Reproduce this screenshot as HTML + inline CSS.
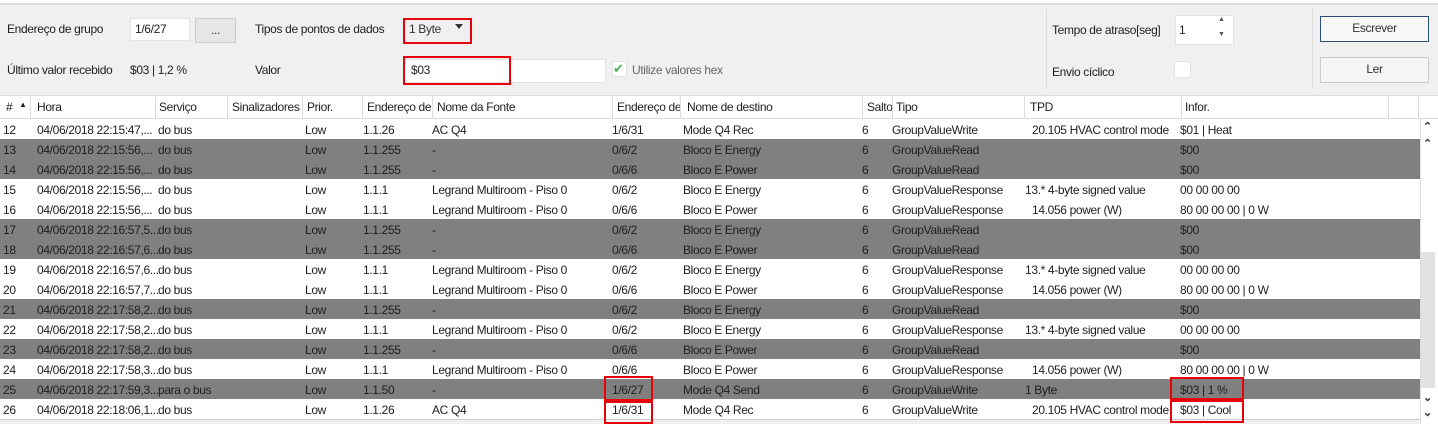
<!DOCTYPE html>
<html><head><meta charset="utf-8"><style>
*{margin:0;padding:0;box-sizing:border-box}
body{width:1438px;height:424px;overflow:hidden;background:#fff;font-family:"Liberation Sans",sans-serif;font-size:12px;color:#1e1e1e;letter-spacing:-0.35px;position:relative}
.a{position:absolute;white-space:nowrap}
.top{position:absolute;left:0;top:0;width:1438px;height:95px;background:#f0f0f0;border-top:3px solid #fff}
.top:before{content:"";position:absolute;left:0;right:0;top:0;height:2px;background:#dadada}
.inp{position:absolute;background:#fff;border:1px solid #e3e3e3}
.red{position:absolute;border:2px solid #e8000b}
.btn{position:absolute;background:#f5f5f5;border:1px solid #ccc;text-align:center;line-height:22px;color:#333}
.hdr{position:absolute;left:0;top:95px;width:1438px;height:24px;background:#fff;border-top:1px solid #ddd;border-bottom:1px solid #ddd}
.hdr span{position:absolute;top:4px;white-space:nowrap}
.hdr i{position:absolute;top:0;width:1px;height:23px;background:#ddd}
.row{position:absolute;left:0;width:1420px;height:20px}
.row span{position:absolute;top:4px;white-space:nowrap}
.g{background:#808080}
</style></head><body>
<div class="top">
<div class="a" style="left:7px;top:19px">Endereço de grupo</div>
<div class="inp" style="left:130px;top:15px;width:60px;height:23px"></div><div class="a" style="left:135px;top:19px">1/6/27</div>
<div class="btn" style="left:195px;top:15px;width:41px;height:25px;background:#e6e6e6">...</div>
<div class="a" style="left:255px;top:19px">Tipos de pontos de dados</div>
<div class="a" style="left:409px;top:19px;color:#333">1 Byte</div>
<div class="a" style="left:455px;top:21px;width:0;height:0;border-left:4px solid transparent;border-right:4px solid transparent;border-top:5px solid #333"></div>
<div class="red" style="left:403px;top:15px;width:69px;height:26px"></div>
<div class="a" style="left:7px;top:60px">Último valor recebido</div>
<div class="a" style="left:130px;top:60px">$03 | 1,2 %</div>
<div class="a" style="left:255px;top:60px">Valor</div>
<div class="inp" style="left:403px;top:56px;width:203px;height:24px"></div>
<div class="a" style="left:411px;top:60px">$03</div>
<div class="red" style="left:403px;top:53px;width:108px;height:29px"></div>
<div class="inp" style="left:612px;top:58px;width:15px;height:16px"></div>
<div class="a" style="left:613px;top:58px;color:#4caf50;font-size:13px">✔</div>
<div class="a" style="left:632px;top:60px;color:#666">Utilize valores hex</div>
<div class="a" style="left:1046px;top:6px;width:1px;height:80px;background:#ddd"></div>
<div class="a" style="left:1312px;top:6px;width:1px;height:80px;background:#ddd"></div>
<div class="a" style="left:1052px;top:20px">Tempo de atraso[seg]</div>
<div class="inp" style="left:1175px;top:12px;width:59px;height:30px"></div>
<div class="a" style="left:1179px;top:20px">1</div>
<div class="a" style="left:1218px;top:13px;font-size:7px;color:#555">▲</div>
<div class="a" style="left:1218px;top:28px;font-size:7px;color:#555">▼</div>
<div class="a" style="left:1052px;top:62px">Envio cíclico</div>
<div class="inp" style="left:1174px;top:58px;width:17px;height:17px"></div>
<div class="btn" style="left:1320px;top:13px;width:109px;height:26px;border-color:#2a4f7a;background:#f8f8f8">Escrever</div>
<div class="btn" style="left:1320px;top:54px;width:109px;height:26px">Ler</div>
</div>
<div class="hdr">
<span style="left:6px">#</span><span style="left:19px;font-size:8px;top:4px">▲</span><i style="left:30px"></i>
<span style="left:37px">Hora</span><i style="left:155px"></i>
<span style="left:159px">Serviço</span><i style="left:227px"></i>
<span style="left:232px">Sinalizadores</span><i style="left:302px"></i>
<span style="left:307px">Prior.</span><i style="left:362px"></i>
<span style="left:367px;width:64px;overflow:hidden">Endereço de</span><i style="left:432px"></i>
<span style="left:437px">Nome da Fonte</span><i style="left:612px"></i>
<span style="left:617px;width:63px;overflow:hidden">Endereço de</span><i style="left:680px"></i>
<span style="left:687px">Nome de destino</span><i style="left:862px"></i>
<span style="left:867px;width:25px;overflow:hidden">Salto</span><i style="left:892px"></i>
<span style="left:896px">Tipo</span><i style="left:1024px"></i>
<span style="left:1030px">TPD</span><i style="left:1181px"></i>
<span style="left:1185px">Infor.</span><i style="left:1388px"></i><i style="left:1418px"></i>
</div>
<div id="rows">
<div class="row" style="top:119px"><span style="left:3px">12</span><span style="left:37px">04/06/2018 22:15:47,...</span><span style="left:158px">do bus</span><span style="left:305px">Low</span><span style="left:363px">1.1.26</span><span style="left:432px">AC Q4</span><span style="left:612px">1/6/31</span><span style="left:683px">Mode Q4 Rec</span><span style="left:862px">6</span><span style="left:892px">GroupValueWrite</span><span style="left:1032px">20.105 HVAC control mode</span><span style="left:1180px">$01 | Heat</span></div>
<div class="row g" style="top:139px"><span style="left:3px">13</span><span style="left:37px">04/06/2018 22:15:56,...</span><span style="left:158px">do bus</span><span style="left:305px">Low</span><span style="left:363px">1.1.255</span><span style="left:432px">-</span><span style="left:612px">0/6/2</span><span style="left:683px">Bloco E Energy</span><span style="left:862px">6</span><span style="left:892px">GroupValueRead</span><span style="left:1180px">$00</span></div>
<div class="row g" style="top:159px"><span style="left:3px">14</span><span style="left:37px">04/06/2018 22:15:56,...</span><span style="left:158px">do bus</span><span style="left:305px">Low</span><span style="left:363px">1.1.255</span><span style="left:432px">-</span><span style="left:612px">0/6/6</span><span style="left:683px">Bloco E Power</span><span style="left:862px">6</span><span style="left:892px">GroupValueRead</span><span style="left:1180px">$00</span></div>
<div class="row" style="top:179px"><span style="left:3px">15</span><span style="left:37px">04/06/2018 22:15:56,...</span><span style="left:158px">do bus</span><span style="left:305px">Low</span><span style="left:363px">1.1.1</span><span style="left:432px">Legrand Multiroom - Piso 0</span><span style="left:612px">0/6/2</span><span style="left:683px">Bloco E Energy</span><span style="left:862px">6</span><span style="left:892px">GroupValueResponse</span><span style="left:1025px">13.* 4-byte signed value</span><span style="left:1180px">00 00 00 00</span></div>
<div class="row" style="top:199px"><span style="left:3px">16</span><span style="left:37px">04/06/2018 22:15:56,...</span><span style="left:158px">do bus</span><span style="left:305px">Low</span><span style="left:363px">1.1.1</span><span style="left:432px">Legrand Multiroom - Piso 0</span><span style="left:612px">0/6/6</span><span style="left:683px">Bloco E Power</span><span style="left:862px">6</span><span style="left:892px">GroupValueResponse</span><span style="left:1032px">14.056 power (W)</span><span style="left:1180px">80 00 00 00 | 0 W</span></div>
<div class="row g" style="top:219px"><span style="left:3px">17</span><span style="left:37px">04/06/2018 22:16:57,5...</span><span style="left:158px">do bus</span><span style="left:305px">Low</span><span style="left:363px">1.1.255</span><span style="left:432px">-</span><span style="left:612px">0/6/2</span><span style="left:683px">Bloco E Energy</span><span style="left:862px">6</span><span style="left:892px">GroupValueRead</span><span style="left:1180px">$00</span></div>
<div class="row g" style="top:239px"><span style="left:3px">18</span><span style="left:37px">04/06/2018 22:16:57,6...</span><span style="left:158px">do bus</span><span style="left:305px">Low</span><span style="left:363px">1.1.255</span><span style="left:432px">-</span><span style="left:612px">0/6/6</span><span style="left:683px">Bloco E Power</span><span style="left:862px">6</span><span style="left:892px">GroupValueRead</span><span style="left:1180px">$00</span></div>
<div class="row" style="top:259px"><span style="left:3px">19</span><span style="left:37px">04/06/2018 22:16:57,6...</span><span style="left:158px">do bus</span><span style="left:305px">Low</span><span style="left:363px">1.1.1</span><span style="left:432px">Legrand Multiroom - Piso 0</span><span style="left:612px">0/6/2</span><span style="left:683px">Bloco E Energy</span><span style="left:862px">6</span><span style="left:892px">GroupValueResponse</span><span style="left:1025px">13.* 4-byte signed value</span><span style="left:1180px">00 00 00 00</span></div>
<div class="row" style="top:279px"><span style="left:3px">20</span><span style="left:37px">04/06/2018 22:16:57,7...</span><span style="left:158px">do bus</span><span style="left:305px">Low</span><span style="left:363px">1.1.1</span><span style="left:432px">Legrand Multiroom - Piso 0</span><span style="left:612px">0/6/6</span><span style="left:683px">Bloco E Power</span><span style="left:862px">6</span><span style="left:892px">GroupValueResponse</span><span style="left:1032px">14.056 power (W)</span><span style="left:1180px">80 00 00 00 | 0 W</span></div>
<div class="row g" style="top:299px"><span style="left:3px">21</span><span style="left:37px">04/06/2018 22:17:58,2...</span><span style="left:158px">do bus</span><span style="left:305px">Low</span><span style="left:363px">1.1.255</span><span style="left:432px">-</span><span style="left:612px">0/6/2</span><span style="left:683px">Bloco E Energy</span><span style="left:862px">6</span><span style="left:892px">GroupValueRead</span><span style="left:1180px">$00</span></div>
<div class="row" style="top:319px"><span style="left:3px">22</span><span style="left:37px">04/06/2018 22:17:58,2...</span><span style="left:158px">do bus</span><span style="left:305px">Low</span><span style="left:363px">1.1.1</span><span style="left:432px">Legrand Multiroom - Piso 0</span><span style="left:612px">0/6/2</span><span style="left:683px">Bloco E Energy</span><span style="left:862px">6</span><span style="left:892px">GroupValueResponse</span><span style="left:1025px">13.* 4-byte signed value</span><span style="left:1180px">00 00 00 00</span></div>
<div class="row g" style="top:339px"><span style="left:3px">23</span><span style="left:37px">04/06/2018 22:17:58,2...</span><span style="left:158px">do bus</span><span style="left:305px">Low</span><span style="left:363px">1.1.255</span><span style="left:432px">-</span><span style="left:612px">0/6/6</span><span style="left:683px">Bloco E Power</span><span style="left:862px">6</span><span style="left:892px">GroupValueRead</span><span style="left:1180px">$00</span></div>
<div class="row" style="top:359px"><span style="left:3px">24</span><span style="left:37px">04/06/2018 22:17:58,3...</span><span style="left:158px">do bus</span><span style="left:305px">Low</span><span style="left:363px">1.1.1</span><span style="left:432px">Legrand Multiroom - Piso 0</span><span style="left:612px">0/6/6</span><span style="left:683px">Bloco E Power</span><span style="left:862px">6</span><span style="left:892px">GroupValueResponse</span><span style="left:1032px">14.056 power (W)</span><span style="left:1180px">80 00 00 00 | 0 W</span></div>
<div class="row g" style="top:379px"><span style="left:3px">25</span><span style="left:37px">04/06/2018 22:17:59,3...</span><span style="left:158px">para o bus</span><span style="left:305px">Low</span><span style="left:363px">1.1.50</span><span style="left:432px">-</span><span style="left:612px">1/6/27</span><span style="left:683px">Mode Q4 Send</span><span style="left:862px">6</span><span style="left:892px">GroupValueWrite</span><span style="left:1025px">1 Byte</span><span style="left:1180px">$03 | 1 %</span></div>
<div class="row" style="top:399px"><span style="left:3px">26</span><span style="left:37px">04/06/2018 22:18:06,1...</span><span style="left:158px">do bus</span><span style="left:305px">Low</span><span style="left:363px">1.1.26</span><span style="left:432px">AC Q4</span><span style="left:612px">1/6/31</span><span style="left:683px">Mode Q4 Rec</span><span style="left:862px">6</span><span style="left:892px">GroupValueWrite</span><span style="left:1032px">20.105 HVAC control mode</span><span style="left:1180px">$03 | Cool</span></div>
</div>
<div class="a" style="left:0;top:419px;width:1420px;height:5px;background:#f0f0f0;border-top:1px solid #ccc"></div>
<div class="a" style="left:1420px;top:118px;width:1px;height:306px;background:#ddd"></div>
<div class="a" style="left:1421px;top:252px;width:14px;height:136px;background:#e2e2e2"></div>
<div class="a" style="left:1423px;top:120px;font-size:11px;color:#333;font-weight:bold">⌃</div>
<div class="a" style="left:1423px;top:137px;font-size:11px;color:#333;font-weight:bold">⌃</div>
<div class="a" style="left:1423px;top:391px;font-size:11px;color:#333;font-weight:bold">⌄</div>
<div class="a" style="left:1423px;top:406px;font-size:11px;color:#333;font-weight:bold">⌄</div>
<div class="red" style="left:604px;top:376px;width:49px;height:25px"></div>
<div class="red" style="left:604px;top:401px;width:49px;height:23px"></div>
<div class="red" style="left:1170px;top:377px;width:74px;height:23px"></div>
<div class="red" style="left:1170px;top:400px;width:74px;height:23px"></div>
</body></html>
